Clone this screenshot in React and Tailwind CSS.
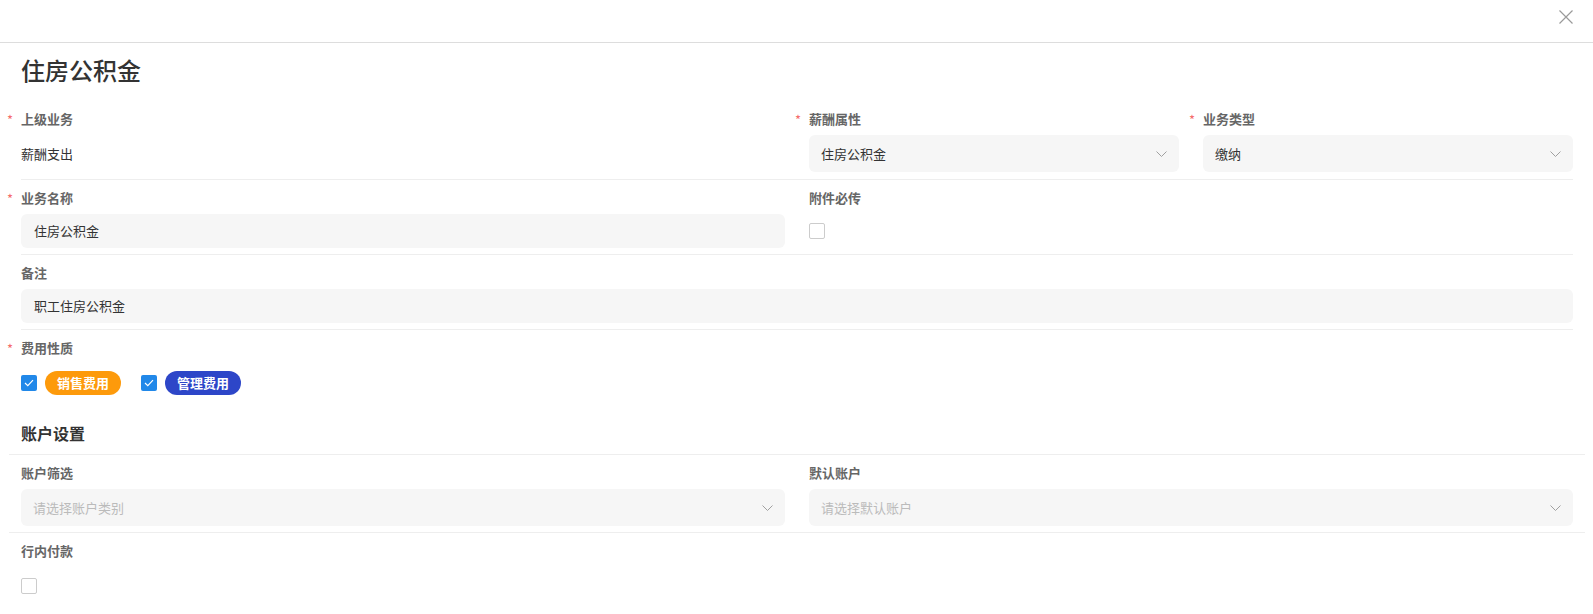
import React from 'react';

const Chevron = () => (
  <svg width="11" height="6" viewBox="0 0 11 6" fill="none" className="shrink-0">
    <path d="M0.5 0.5 L5.5 5.5 L10.5 0.5" stroke="#a0a0a0" strokeWidth="1" />
  </svg>
);

const Label = ({ children, required }) => (
  <div className="relative h-[18px] leading-[18px] text-[13px] font-bold text-[#666]">
    {required && <span className="absolute -left-[14px] top-[1px] font-normal text-[#f56c6c]">*</span>}
    {children}
  </div>
);

const Select = ({ value, placeholder }) => (
  <div className="mt-[7px] h-[37px] rounded-md bg-[#f6f6f6] px-3 flex items-center justify-between text-[13px]">
    <span className={value ? 'text-[#333]' : 'text-[#bbb]'}>{value || placeholder}</span>
    <Chevron />
  </div>
);

const Input = ({ value }) => (
  <div className="mt-[7px] h-[34px] rounded-md bg-[#f6f6f6] px-[13px] flex items-center text-[13px] text-[#333]">
    {value}
  </div>
);

const Checkbox = ({ checked }) =>
  checked ? (
    <span className="w-4 h-4 rounded-[2px] bg-[#2188e9] flex items-center justify-center shrink-0">
      <svg width="10" height="8" viewBox="0 0 10 8" fill="none">
        <path d="M1 4 L3.8 6.6 L9 1.2" stroke="#fff" strokeWidth="1.2" />
      </svg>
    </span>
  ) : (
    <span className="w-4 h-4 rounded-[2px] border border-[#ccc] bg-white shrink-0" />
  );

const App = () => {
  return (
    <div className="min-h-screen bg-white font-['Noto_Sans_CJK_SC','Noto_Sans',sans-serif] text-[#333]">
      {/* Top Bar */}
      <div className="h-[43px] border-b border-[#ddd] flex justify-end pt-[10px] pr-[20px]">
        <svg width="14" height="14" viewBox="0 0 14 14" fill="none">
          <path d="M0.5 0.5 L13.5 13.5 M13.5 0.5 L0.5 13.5" stroke="#9a9a9a" strokeWidth="1.2" />
        </svg>
      </div>

      <div className="pl-[21px] pr-[20px]">
        <h1 className="pt-[11px] mb-[15px] text-[24px] leading-8 font-medium text-[#333]">住房公积金</h1>

        <div className="grid grid-cols-4 gap-x-6 pt-[9px] pb-[7px] border-b border-[#eee]">
          <div className="col-span-2">
            <Label required>上级业务</Label>
            <div className="mt-[7px] h-[37px] flex items-center text-[13px] text-[#333]">薪酬支出</div>
          </div>
          <div>
            <Label required>薪酬属性</Label>
            <Select value="住房公积金" />
          </div>
          <div>
            <Label required>业务类型</Label>
            <Select value="缴纳" />
          </div>
        </div>

        <div className="grid grid-cols-4 gap-x-6 pt-[9px] pb-[6px] border-b border-[#eee]">
          <div className="col-span-2">
            <Label required>业务名称</Label>
            <Input value="住房公积金" />
          </div>
          <div className="col-span-2">
            <Label>附件必传</Label>
            <div className="mt-[7px] h-[34px] flex items-center">
              <Checkbox />
            </div>
          </div>
        </div>

        <div className="pt-[9px] pb-[6px] border-b border-[#eee]">
          <Label>备注</Label>
          <Input value="职工住房公积金" />
        </div>

        <div className="pt-[9px] pb-[6px]">
          <Label required>费用性质</Label>
          <div className="mt-[7px] h-[37px] flex items-center">
            <Checkbox checked />
            <span className="ml-2 h-6 w-[76px] rounded-full bg-[#fd9a0b] text-white text-[13px] font-bold flex items-center justify-center">销售费用</span>
            <span className="ml-5">
              <Checkbox checked />
            </span>
            <span className="ml-2 h-6 w-[76px] rounded-full bg-[#2d46c8] text-white text-[13px] font-bold flex items-center justify-center">管理费用</span>
          </div>
        </div>
      </div>

      {/* Account settings */}
      <div className="pl-[9px] pr-[8px]">
        <h2 className="pl-3 pt-[14px] pb-[9px] border-b border-[#eee] text-base leading-6 font-bold text-[#333]">账户设置</h2>

        <div className="grid grid-cols-2 gap-x-6 px-3 pt-[9px] pb-[6px] border-b border-[#eee]">
          <div>
            <Label>账户筛选</Label>
            <Select placeholder="请选择账户类别" />
          </div>
          <div>
            <Label>默认账户</Label>
            <Select placeholder="请选择默认账户" />
          </div>
        </div>

        <div className="px-3 pt-[9px]">
          <Label>行内付款</Label>
          <div className="mt-[7px] h-[37px] flex items-center">
            <Checkbox />
          </div>
        </div>
      </div>
    </div>
  );
};

export default App;
